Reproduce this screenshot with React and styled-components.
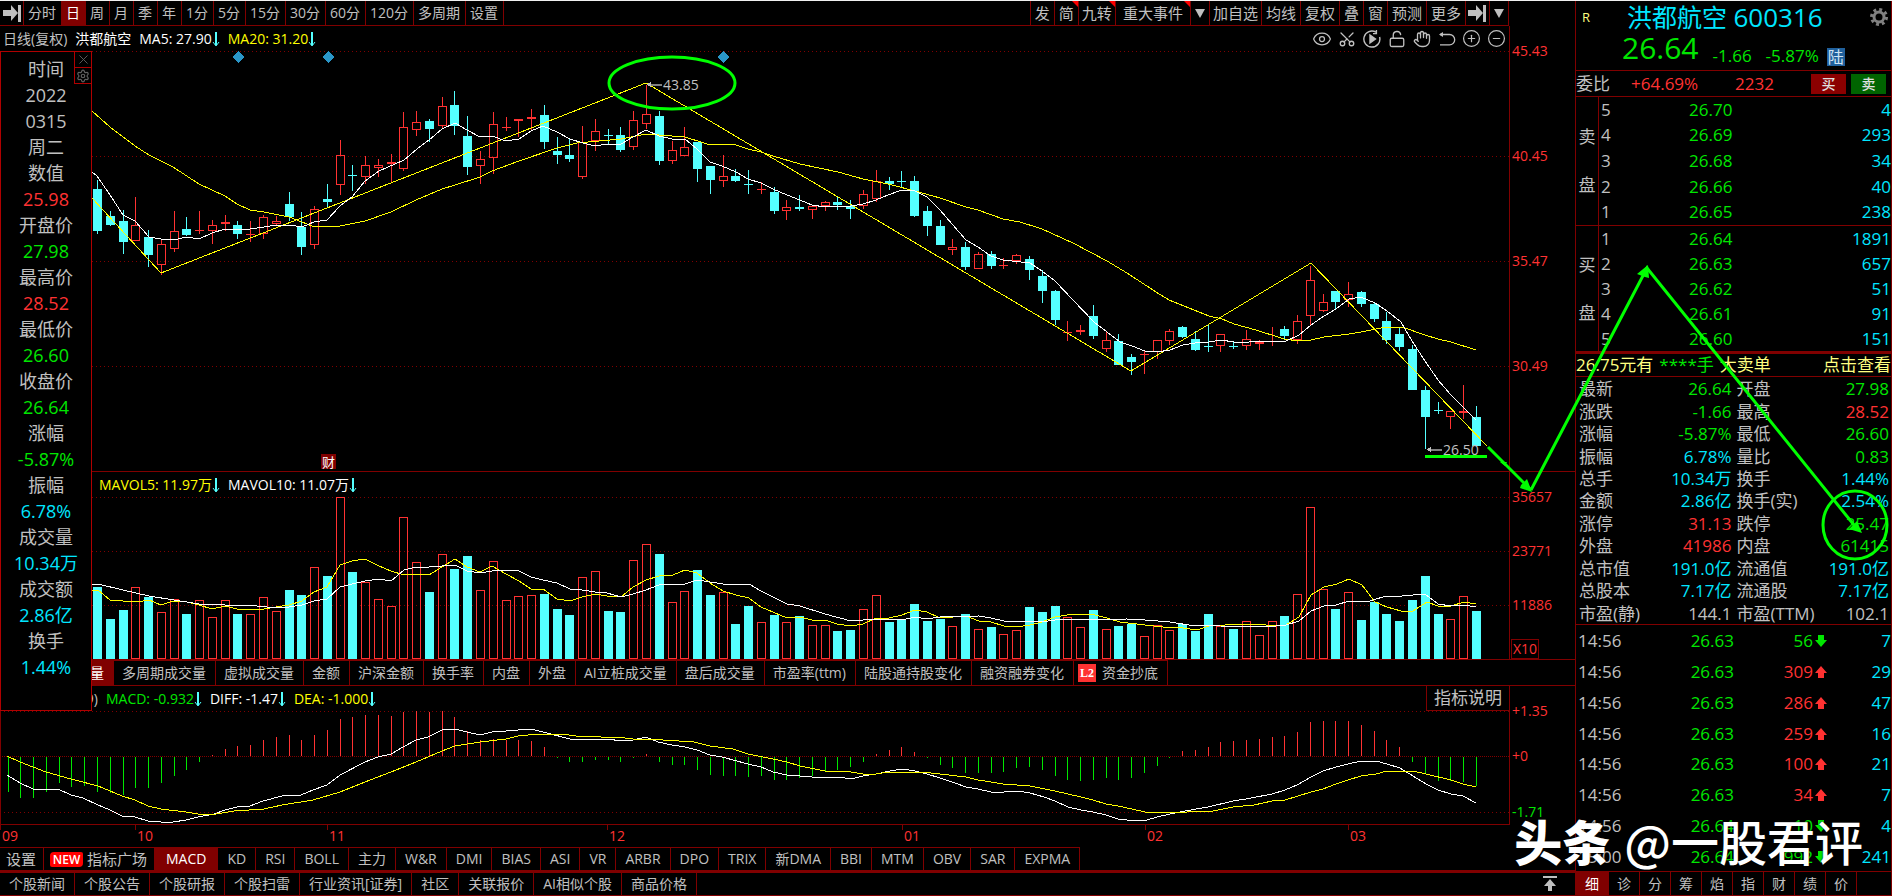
import React, { useState } from 'react';
import styled, { createGlobalStyle, css } from 'styled-components';
import { Eye, Scissors, LockOpen, Hand, CirclePlus, CircleMinus, X, Settings } from 'lucide-react';

const colors = {
  line: '#800000',
  frame: '#b00000',
  grey: '#c0c0c0',
  red: '#ff3232',
  green: '#00e600',
  cyan: '#00e6ff',
  bar: '#54ffff',
  yellow: '#ffff00',
  pale: '#ffff80',
  white: '#ffffff',
  mark: '#00ff00',
};

const PITCH = 12.767;
const center = (i) => 97 + Math.round(PITCH * i);

// [rising, high, body top, body bottom, low, volume top]
const candles = [
  [0, 180, 189, 231, 234, 587], [0, 211, 216, 225, 226, 619], [0, 210, 221, 242, 254, 610],
  [1, 197, 225, 241, 241, 587], [0, 230, 237, 255, 267, 597], [1, 240, 244, 265, 275, 612],
  [1, 211, 231, 249, 252, 599], [0, 217, 229, 235, 236, 614], [1, 211, 230, 231, 234, 600],
  [1, 220, 225, 231, 244, 617], [1, 215, 222, 224, 231, 600], [0, 221, 225, 234, 239, 614],
  [1, 221, 234, 235, 242, 614], [1, 215, 217, 234, 239, 597], [1, 216, 221, 224, 226, 611],
  [0, 192, 204, 217, 221, 590], [0, 212, 227, 247, 255, 595], [1, 206, 209, 245, 249, 567],
  [0, 184, 199, 202, 207, 576], [1, 140, 155, 185, 195, 497], [0, 165, 175, 176, 191, 572],
  [1, 156, 165, 177, 184, 582], [1, 159, 165, 168, 177, 599], [1, 154, 162, 164, 182, 606],
  [1, 112, 127, 169, 171, 517], [1, 111, 122, 130, 136, 562], [0, 119, 121, 129, 142, 592],
  [1, 97, 106, 126, 128, 554], [0, 91, 105, 126, 135, 569], [0, 116, 136, 167, 175, 556],
  [1, 151, 159, 166, 184, 590], [1, 112, 124, 158, 174, 561], [1, 117, 127, 128, 131, 600],
  [1, 119, 119, 121, 137, 596], [1, 109, 117, 119, 130, 595], [0, 105, 115, 142, 149, 594],
  [0, 137, 151, 155, 164, 609], [0, 138, 155, 159, 162, 615], [1, 126, 142, 177, 179, 577],
  [1, 119, 131, 141, 151, 571], [0, 129, 135, 136, 145, 611], [0, 127, 135, 150, 152, 612],
  [1, 111, 120, 147, 150, 560], [1, 85, 114, 124, 129, 544], [0, 111, 116, 161, 165, 554],
  [1, 141, 150, 161, 164, 602], [1, 127, 147, 156, 156, 591], [0, 142, 142, 169, 182, 570],
  [0, 166, 166, 180, 194, 595], [1, 155, 176, 181, 187, 592], [0, 169, 176, 181, 182, 624],
  [0, 170, 184, 185, 194, 606], [1, 182, 189, 190, 194, 622], [0, 187, 192, 211, 214, 615],
  [1, 200, 207, 211, 220, 622], [0, 195, 207, 209, 211, 616], [1, 206, 206, 210, 219, 625],
  [1, 201, 202, 206, 211, 625], [0, 196, 202, 205, 210, 631], [0, 200, 206, 209, 219, 630],
  [1, 190, 194, 206, 209, 609], [1, 170, 181, 199, 202, 595], [0, 177, 181, 184, 190, 622],
  [0, 171, 181, 182, 187, 620], [0, 176, 181, 216, 217, 604], [0, 206, 211, 226, 236, 621],
  [0, 220, 226, 245, 245, 619], [1, 239, 247, 250, 255, 626], [0, 242, 247, 267, 270, 614],
  [1, 252, 254, 269, 269, 629], [0, 251, 254, 266, 269, 627], [1, 258, 265, 266, 269, 634],
  [1, 254, 255, 261, 264, 630], [0, 256, 259, 270, 280, 607], [0, 270, 276, 291, 303, 612],
  [0, 290, 291, 320, 325, 606], [1, 321, 332, 333, 341, 617], [1, 325, 330, 332, 335, 627],
  [0, 305, 316, 336, 339, 610], [1, 332, 340, 349, 352, 629], [0, 334, 341, 365, 365, 626],
  [0, 354, 357, 362, 375, 624], [1, 350, 354, 355, 374, 636], [1, 340, 340, 352, 359, 625],
  [1, 329, 331, 341, 345, 630], [0, 326, 327, 337, 338, 624], [0, 331, 339, 350, 351, 631],
  [0, 325, 346, 347, 352, 614], [1, 334, 334, 346, 352, 626], [0, 342, 346, 347, 349, 629],
  [1, 330, 339, 346, 350, 621], [1, 340, 342, 344, 350, 635], [1, 327, 341, 342, 346, 621],
  [0, 326, 329, 336, 340, 616], [1, 315, 321, 340, 344, 594], [1, 266, 280, 316, 325, 507],
  [1, 294, 302, 311, 312, 589], [0, 291, 291, 302, 309, 609], [1, 282, 294, 300, 307, 592],
  [0, 291, 292, 304, 307, 620], [0, 302, 304, 319, 322, 602], [0, 312, 321, 340, 344, 614],
  [0, 328, 334, 347, 351, 621], [0, 345, 349, 390, 390, 600], [0, 386, 390, 417, 449, 576],
  [0, 402, 410, 411, 414, 614], [1, 411, 411, 417, 429, 619], [1, 385, 411, 413, 419, 596],
  [0, 406, 417, 446, 446, 611],
];

// histogram starts seven bars before the first visible candle
const macdBars = [
  -35, -41, -41, -35, -26, -30, -29, -35, -36, -38, -31, -31, -26, -19, -13, -5, 1, 7, 10, 11,
  16, 19, 21, 16, 21, 26, 37, 39, 41, 41, 40, 44, 45, 44, 45, 39, 25, 16, 17, 16, 16, 15, 9,
  -1, -5, -5, -3, -3, -5, -1, 2, -5, -8, -8, -13, -18, -19, -19, -20, -19, -23, -23, -21,
  -19, -15, -13, -10, -5, 2, 6, 9, 4, -1, -8, -11, -16, -16, -16, -15, -11, -10, -13, -19, -23,
  -24, -23, -21, -23, -21, -16, -9, -1, 5, 6, 9, 14, 15, 16, 17, 19, 20, 24, 34, 35, 35, 35, 31,
  25, 16, 9, -5, -17, -24, -24, -25, -29,
];

const ma5 =
  '92,172 97,176 110,195 123,215 135,221 149,237 161,239 173,240 187,237 199,239 212,233 225,229 250,229 264,227 276,225 289,225 302,227 314,222 327,220 340,206 352,197 365,181 379,171 404,160 417,149 429,140 442,129 455,123 467,130 480,137 492,136 506,141 519,139 531,131 543,126 557,132 570,139 583,143 595,146 607,144 621,144 633,137 646,130 659,136 672,139 685,139 697,149 710,162 722,166 736,172 748,179 761,183 773,189 787,195 800,200 812,205 825,207 851,206 863,204 876,200 888,195 902,190 915,191 927,197 940,210 952,224 966,240 978,247 991,256 1003,260 1030,263 1042,271 1055,281 1073,300 1094,322 1107,332 1120,342 1132,346 1145,351 1157,352 1170,350 1183,345 1195,343 1209,342 1221,340 1234,342 1249,342 1270,341 1286,341 1299,335 1311,325 1324,316 1336,309 1349,299 1361,297 1368,300 1375,303 1387,311 1401,322 1412,341 1425,361 1438,380 1451,395 1464,408 1476,420';
const ma20 =
  '92,111 110,127 135,146 149,155 173,167 199,184 225,196 237,204 250,210 264,212 289,217 302,222 312,226 340,226 365,221 391,212 416,200 442,189 455,185 480,177 492,171 519,161 557,148 577,143 621,139 646,134 685,137 707,144 736,145 748,149 761,152 773,156 800,164 838,172 863,179 888,184 915,191 940,198 966,207 978,210 1003,219 1020,222 1042,229 1073,243 1107,261 1127,273 1156,292 1169,300 1209,316 1222,319 1234,324 1256,330 1284,339 1299,341 1311,340 1324,337 1349,334 1361,332 1381,328 1402,327 1425,335 1438,339 1451,342 1476,350';
const zigzag = '92,198 161,273 646,83 1131,371 1311,263 1487,446';
const mavol5 =
  '92,590 98,590 110,600 123,601 137,602 149,600 161,605 173,601 187,602 199,605 212,609 225,606 237,609 264,609 276,607 289,605 302,601 314,592 327,587 340,565 352,561 365,559 379,566 391,571 404,575 420,574 429,575 442,567 455,559 467,567 480,572 492,566 506,574 519,581 531,589 543,589 557,599 570,601 582,597 595,594 607,596 621,597 633,587 646,580 659,576 673,575 685,570 697,573 710,583 723,591 736,595 749,598 761,607 787,618 800,617 812,620 825,620 837,624 851,626 863,624 876,618 889,618 902,615 915,610 927,612 940,618 966,616 979,621 991,622 1004,626 1017,627 1030,625 1042,622 1055,617 1067,615 1081,614 1095,615 1107,618 1120,622 1145,625 1163,627 1183,628 1197,630 1209,626 1241,624 1266,625 1286,625 1299,617 1311,595 1324,587 1337,584 1349,579 1362,585 1375,602 1387,607 1401,611 1413,611 1427,602 1438,606 1451,606 1464,602 1476,604';
const mavol10 =
  '92,584 98,584 123,590 149,596 199,604 225,605 257,606 276,608 289,607 302,605 314,601 327,599 340,587 352,584 365,581 379,579 391,581 404,570 416,567 429,567 455,565 467,571 480,573 492,571 517,570 531,577 543,580 557,583 570,589 582,590 595,592 607,593 621,597 633,594 646,590 659,585 685,584 697,580 710,582 723,584 736,585 749,584 761,591 787,604 800,606 825,614 851,621 876,619 902,620 915,617 927,619 940,617 979,616 991,618 1004,621 1017,622 1030,621 1042,622 1055,620 1127,619 1145,620 1170,622 1195,626 1209,625 1220,626 1266,627 1286,625 1299,621 1311,611 1324,606 1336,605 1349,601 1370,601 1386,596 1402,596 1425,594 1438,604 1451,606 1464,605 1476,607';
const diff =
  '7,775 20,783 33,789 58,789 71,795 83,798 98,805 110,810 122,816 135,817 148,821 161,822 173,822 186,820 198,817 214,814 225,810 237,807 250,806 263,801 282,796 301,795 313,790 327,785 340,775 365,762 378,757 391,754 403,747 416,740 428,737 442,730 455,729 467,732 480,735 492,732 506,731 531,729 543,732 570,739 608,739 621,741 633,740 646,737 658,742 672,745 685,747 697,750 710,755 722,757 748,764 761,767 773,772 787,775 800,776 812,777 838,777 851,779 863,776 876,774 890,771 902,769 915,771 927,774 940,778 952,782 966,787 978,789 991,792 1004,792 1017,791 1030,793 1044,797 1055,801 1068,807 1081,810 1093,812 1106,815 1118,819 1127,820 1147,820 1157,817 1170,814 1185,811 1208,807 1233,801 1246,799 1272,794 1285,790 1297,785 1311,777 1323,771 1336,767 1348,764 1361,761 1376,761 1387,764 1400,768 1413,776 1426,784 1438,790 1451,794 1463,796 1476,803';
const dea =
  '7,756 20,762 33,767 46,772 71,779 98,786 122,796 135,800 148,806 161,809 186,812 198,814 216,814 234,811 264,809 282,805 313,800 340,792 365,782 391,772 416,762 442,751 455,746 480,742 506,739 518,736 539,734 561,734 576,736 625,738 633,739 663,740 694,742 710,746 733,749 748,754 773,759 787,762 800,766 825,771 851,772 863,774 876,774 888,772 922,772 940,774 966,777 978,780 991,782 1003,784 1030,786 1055,791 1081,797 1093,800 1106,804 1118,806 1132,809 1145,812 1154,812 1187,812 1213,811 1233,807 1254,805 1272,801 1285,800 1311,792 1323,789 1336,784 1348,780 1361,776 1376,774 1387,771 1413,771 1426,774 1451,780 1463,784 1476,787';

const periods = ['分时', '日', '周', '月', '季', '年', '1分', '5分', '15分', '30分', '60分', '120分', '多周期', '设置'];
const volumeTabs = ['成交量', '多周期成交量', '虚拟成交量', '金额', '沪深金额', '换手率', '内盘', '外盘', 'AI立桩成交量', '盘后成交量', '市盈率(ttm)', '陆股通持股变化', '融资融券变化'];
const indicators = ['MACD', 'KD', 'RSI', 'BOLL', '主力', 'W&R', 'DMI', 'BIAS', 'ASI', 'VR', 'ARBR', 'DPO', 'TRIX', '新DMA', 'BBI', 'MTM', 'OBV', 'SAR', 'EXPMA'];
const news = ['个股新闻', '个股公告', '个股研报', '个股扫雷', '行业资讯[证券]', '社区', '关联报价', 'AI相似个股', '商品价格'];
const sideTabs = ['细', '诊', '分', '筹', '焰', '指', '财', '绩', '价'];
const months = [['09', 0], ['10', 135], ['11', 327], ['12', 607], ['01', 902], ['02', 1145], ['03', 1348]];

const dayData = [
  ['时间'], ['2022'], ['0315'], ['周二'],
  ['数值'], ['25.98', 'red'], ['开盘价'], ['27.98', 'green'],
  ['最高价'], ['28.52', 'red'], ['最低价'], ['26.60', 'green'],
  ['收盘价'], ['26.64', 'green'], ['涨幅'], ['-5.87%', 'green'],
  ['振幅'], ['6.78%', 'cyan'], ['成交量'], ['10.34万', 'cyan'],
  ['成交额'], ['2.86亿', 'cyan'], ['换手'], ['1.44%', 'cyan'],
];

const asks = [['5', '26.70', '4'], ['4', '26.69', '293'], ['3', '26.68', '34'], ['2', '26.66', '40'], ['1', '26.65', '238']];
const bids = [['1', '26.64', '1891'], ['2', '26.63', '657'], ['3', '26.62', '51'], ['4', '26.61', '91'], ['5', '26.60', '151']];

const stats = [
  ['最新', '26.64', 'green', '开盘', '27.98', 'green'],
  ['涨跌', '-1.66', 'green', '最高', '28.52', 'red'],
  ['涨幅', '-5.87%', 'green', '最低', '26.60', 'green'],
  ['振幅', '6.78%', 'cyan', '量比', '0.83', 'green'],
  ['总手', '10.34万', 'cyan', '换手', '1.44%', 'cyan'],
  ['金额', '2.86亿', 'cyan', '换手(实)', '2.54%', 'cyan'],
  ['涨停', '31.13', 'red', '跌停', '25.47', 'green'],
  ['外盘', '41986', 'red', '内盘', '61415', 'green'],
  ['总市值', '191.0亿', 'cyan', '流通值', '191.0亿', 'cyan'],
  ['总股本', '7.17亿', 'cyan', '流通股', '7.17亿', 'cyan'],
  ['市盈(静)', '144.1', 'grey', '市盈(TTM)', '102.1', 'grey'],
];

const trades = [
  ['14:56', '26.63', '56', 0, '7'],
  ['14:56', '26.63', '309', 1, '29'],
  ['14:56', '26.63', '286', 1, '47'],
  ['14:56', '26.63', '259', 1, '16'],
  ['14:56', '26.63', '100', 1, '21'],
  ['14:56', '26.63', '34', 1, '7'],
  ['14:56', '26.64', '10', 0, '4'],
  ['15:00', '26.64', '992', 0, '241'],
];

const GoToEnd = () => (
  <svg width='19' height='17' viewBox='0 0 19 17' fill={colors.grey}>
    <path d='M0 5h8V0l7 8-7 8v-5H0z' />
    <rect x='15' y='0' width='3' height='17' />
  </svg>
);

const Caret = () => (
  <svg width='10' height='9' viewBox='0 0 10 9' fill={colors.grey}>
    <path d='M0 0h10L5 9z' />
  </svg>
);

const DownMark = () => (
  <svg width='8' height='16' viewBox='0 0 8 16' fill='none' stroke={colors.bar}>
    <path d='M4 1v13' strokeWidth='2' />
    <path d='M1 11l3 4 3-4' />
  </svg>
);

const BlockArrow = ({ up }) => (
  <svg width='12' height='12' viewBox='0 0 12 12' fill={up ? colors.red : colors.green}>
    <path d={up ? 'M6 0l6 7H9v5H3V7H0z' : 'M6 12l6-7H9V0H3v5H0z'} />
  </svg>
);

const Replay = () => (
  <svg width='18' height='18' viewBox='0 0 18 18' fill='none' stroke={colors.grey} strokeWidth='1.4'>
    <path d='M13 2.2A8 8 0 1 0 16.6 7' />
    <path d='M13.4 0v3.6H10' />
    <path d='M7 5l5.5 4L7 13z' fill={colors.grey} />
  </svg>
);

const Undo = () => (
  <svg width='18' height='18' viewBox='0 0 18 18' fill='none' stroke={colors.grey} strokeWidth='1.3'>
    <path d='M2 4.5h9.5a5.2 5.2 0 0 1 0 10.4H2' />
    <path d='M5 2L1 4.5 5 7z' fill={colors.grey} stroke='none' />
  </svg>
);

const ToTop = () => (
  <svg width='14' height='16' viewBox='0 0 14 16' fill={colors.grey}>
    <path d='M0 0h14v2H0zM7 3l6 7H9v5H5v-5H1z' />
  </svg>
);

const Candles = () =>
  candles.map(([up, high, top, bottom, low], i) => {
    const x = center(i);
    const color = up ? colors.red : colors.bar;
    const flat = bottom - top < 2;
    return (
      <g key={i} stroke={color} fill={up ? 'none' : color}>
        <path d={`M${x + 0.5} ${high}V${top}M${x + 0.5} ${bottom}V${low}`} />
        {flat && <path d={`M${x - 4} ${top + 0.5}h9`} />}
        {!flat && up === 1 && <rect x={x - 3.5} y={top + 0.5} width='8' height={bottom - top - 1} />}
        {!flat && !up && <rect x={x - 4} y={top} width='9' height={bottom - top} stroke='none' />}
      </g>
    );
  });

const Volumes = () =>
  candles.map(([up, , , , , top], i) => {
    const x = center(i);
    return up ? (
      <rect key={i} x={x - 3.5} y={top + 0.5} width='8' height={658 - top} fill='none' stroke={colors.red} />
    ) : (
      <rect key={i} x={x - 4} y={top} width='9' height={659 - top} fill={colors.bar} />
    );
  });

const Histogram = () =>
  macdBars.map((value, i) => (
    <path
      key={i}
      d={`M${center(i - 7) + 0.5} ${value > 0 ? 756 : 757}v${-value}`}
      stroke={value > 0 ? colors.red : colors.green}
    />
  ));

const Grid = ({ rows }) =>
  rows.map((y) => (
    <line key={y} x1='0' x2='100%' y1={y + 0.5} y2={y + 0.5} stroke={colors.line} strokeDasharray='1 3' />
  ));

const Book = ({ side, rows, $thick }) => (
  <BookSection $thick={$thick}>
    <BookSide>
      <span>{side}</span>
      <span>盘</span>
    </BookSide>
    <BookTable>
      <tbody>
        {rows.map(([level, price, amount]) => (
          <tr key={level}>
            <Cell $color='grey'>{level}</Cell>
            <Cell $color='green'>{price}</Cell>
            <Cell $color='cyan' $right>{amount}</Cell>
          </tr>
        ))}
      </tbody>
    </BookTable>
  </BookSection>
);

const App = () => {
  const [period, setPeriod] = useState('日');
  const [volumeTab, setVolumeTab] = useState('成交量');
  const [indicator, setIndicator] = useState('MACD');
  const [sideTab, setSideTab] = useState('细');

  return (
    <Terminal>
      <GlobalStyle />
      <Main>
        <Toolbar>
          <ToolButton aria-label='收起'>
            <GoToEnd />
          </ToolButton>
          {periods.map((name) => (
            <ToolButton key={name} $active={name === period} onClick={() => setPeriod(name)}>
              {name}
            </ToolButton>
          ))}
          <Spacer />
          <MenuButton $first>发</MenuButton>
          <MenuButton $flag>简</MenuButton>
          <MenuButton $flag $pad={3}>九转</MenuButton>
          <MenuButton $flag $pad={7}>重大事件</MenuButton>
          <MenuButton aria-label='展开'><Caret /></MenuButton>
          <MenuButton $pad={3}>加自选</MenuButton>
          <MenuButton>均线</MenuButton>
          <MenuButton>复权</MenuButton>
          <MenuButton>叠</MenuButton>
          <MenuButton>窗</MenuButton>
          <MenuButton>预测</MenuButton>
          <MenuButton>更多</MenuButton>
          <MenuButton $pad={2} aria-label='最新'><GoToEnd /></MenuButton>
          <MenuButton aria-label='菜单'><Caret /></MenuButton>
        </Toolbar>

        <Pane>
          <Plot>
            <InfoRow $left={3}>
              <Info $color='grey'>日线(复权)</Info>
              <Info $color='white'>洪都航空</Info>
              <Info $color='white'>MA5: 27.90<DownMark /></Info>
              <Info $color='yellow'>MA20: 31.20<DownMark /></Info>
              <ChartTools>
                <IconButton aria-label='显示'><Eye size={20} strokeWidth={1.5} /></IconButton>
                <IconButton aria-label='剪切' $turn><Scissors size={18} strokeWidth={1.75} /></IconButton>
                <IconButton aria-label='回放'><Replay /></IconButton>
                <IconButton aria-label='锁定'><LockOpen size={18} strokeWidth={1.75} /></IconButton>
                <IconButton aria-label='拖动'><Hand size={18} strokeWidth={1.75} /></IconButton>
                <IconButton aria-label='撤销'><Undo /></IconButton>
                <IconButton aria-label='放大'><CirclePlus size={19} strokeWidth={1.5} /></IconButton>
                <IconButton aria-label='缩小'><CircleMinus size={19} strokeWidth={1.5} /></IconButton>
              </ChartTools>
            </InfoRow>
            <Chart $height={420}>
              <g transform='translate(0 -51)'>
                <Grid rows={[51, 156, 261, 366]} />
                <Candles />
                <polyline points={ma20} stroke={colors.yellow} />
                <polyline points={zigzag} stroke={colors.yellow} />
                <polyline points={ma5} stroke={colors.white} />
                {[238, 328, 723].map((x) => (
                  <path key={x} d={`M${x} 51l6 6-6 6-6-6z`} fill='#2a96c8' />
                ))}
                <path d='M648 84.5h14M1428 449.5h14' stroke='#808080' strokeWidth='2' />
                <path d='M647 84.5l4-3v6zM1427 449.5l4-3v6z' fill={colors.grey} />
                <ChartText x='663' y='90'>43.85</ChartText>
                <ChartText x='1443' y='455'>26.50</ChartText>
                <rect x='321' y='454' width='15' height='15' fill={colors.line} />
                <ChartText x='322' y='467' $color='white' $size={13}>财</ChartText>
              </g>
            </Chart>
          </Plot>
          <Axis $rows='105px 105px 105px 20px'>
            <li>45.43</li>
            <li>40.45</li>
            <li>35.47</li>
            <li>30.49</li>
          </Axis>
        </Pane>

        <Pane>
          <Plot>
            <InfoRow $left={99}>
              <Info $color='yellow'>MAVOL5: 11.97万<DownMark /></Info>
              <Info $color='white'>MAVOL10: 11.07万<DownMark /></Info>
            </InfoRow>
            <Chart $height={162}>
              <g transform='translate(0 -497)'>
                <Grid rows={[497, 551, 605]} />
                <Volumes />
                <polyline points={mavol5} stroke={colors.yellow} />
                <polyline points={mavol10} stroke={colors.white} />
              </g>
            </Chart>
          </Plot>
          <Axis $rows='54px 54px 1fr auto'>
            <li>35657</li>
            <li>23771</li>
            <li>11886</li>
            <Unit>X10</Unit>
          </Axis>
        </Pane>

        <VolumeTabs>
          {volumeTabs.map((name) => (
            <TabButton key={name} $active={name === volumeTab} onClick={() => setVolumeTab(name)}>
              {name}
            </TabButton>
          ))}
          <TabButton $badge>
            <LevelBadge>L2</LevelBadge>资金抄底
          </TabButton>
        </VolumeTabs>

        <Pane $open>
          <Plot $closed>
            <InfoRow $left={2}>
              <Info $color='grey'>MACD(12,26,9)</Info>
              <Info $color='green'>MACD: -0.932<DownMark /></Info>
              <Info $color='white'>DIFF: -1.47<DownMark /></Info>
              <Info $color='yellow'>DEA: -1.000<DownMark /></Info>
              <HelpButton>指标说明</HelpButton>
            </InfoRow>
            <Chart $height={113}>
              <g transform='translate(0 -711)'>
                <Grid rows={[711, 812]} />
                <line x1='0' x2='100%' y1='756.5' y2='756.5' stroke={colors.line} strokeDasharray='1 1' />
                <path d='M0.5 711v113' stroke={colors.line} />
                <Histogram />
                <polyline points={diff} stroke={colors.white} />
                <polyline points={dea} stroke={colors.yellow} />
              </g>
            </Chart>
          </Plot>
          <Axis $rows='45px 56px 20px'>
            <li>+1.35</li>
            <li>+0</li>
            <Fall>-1.71</Fall>
          </Axis>
        </Pane>
        <Chart $height={22}>
          {months.map(([name, x]) => (
            <g key={name}>
              <path d={`M${x + 0.5} 0v5`} stroke={colors.line} />
              <ChartText x={x + 2} y='16' $color='red'>{name}</ChartText>
            </g>
          ))}
        </Chart>

        <IndicatorTabs>
          <TabButton $large>设置</TabButton>
          <TabButton $large>
            <NewBadge>NEW</NewBadge>指标广场
          </TabButton>
          {indicators.map((name) => (
            <TabButton key={name} $wide $active={name === indicator} onClick={() => setIndicator(name)}>
              {name}
            </TabButton>
          ))}
        </IndicatorTabs>
        <NewsBar>
          {news.map((name) => (
            <NewsLink key={name} href='#'>{name}</NewsLink>
          ))}
          <TopButton aria-label='置顶'><ToTop /></TopButton>
        </NewsBar>

        <DayPanel>
          {dayData.map(([text, color], i) => (
            <DayLine key={i} $color={color}>{text}</DayLine>
          ))}
          <DayTools>
            <DayButton aria-label='关闭'><X size={15} strokeWidth={1.5} /></DayButton>
            <DayButton aria-label='设置'><Settings size={14} strokeWidth={2} /></DayButton>
          </DayTools>
        </DayPanel>
      </Main>

      <Quote>
        <QuoteHead>
          <TitleRow>
            <Tag>R</Tag>
            <Title>洪都航空 <Code>600316</Code></Title>
            <IconButton $dim aria-label='设置'>
              <svg width='18' height='18' viewBox='0 0 18 18' fill='none' stroke='#808080'>
                <circle cx='9' cy='9' r='5' strokeWidth='3' />
                <circle cx='9' cy='9' r='7.5' strokeWidth='3' strokeDasharray='2.9 2.99' />
              </svg>
            </IconButton>
          </TitleRow>
          <PriceRow>
            <Price>26.64</Price>
            <span>-1.66</span>
            <span>-5.87%</span>
            <MarketBadge>陆</MarketBadge>
          </PriceRow>
        </QuoteHead>
        <RatioRow>
          <span>委比</span>
          <Rise>+64.69%</Rise>
          <Rise>2232</Rise>
          <TradeButton>买</TradeButton>
          <TradeButton $sell>卖</TradeButton>
        </RatioRow>
        <Book side='卖' rows={asks} />
        <Book side='买' rows={bids} $thick />
        <Alert>
          <span>26.75元有</span>
          <AlertAmount>****手</AlertAmount>
          <span>大卖单</span>
          <AlertLink href='#'>点击查看</AlertLink>
        </Alert>
        <StatTable>
          <tbody>
            {stats.map(([a, av, ac, b, bv, bc]) => (
              <tr key={a}>
                <Cell $color='grey'>{a}</Cell>
                <Cell $color={ac} $right>{av}</Cell>
                <Cell $color='grey'>{b}</Cell>
                <Cell $color={bc} $right>{bv}</Cell>
              </tr>
            ))}
          </tbody>
        </StatTable>
        <TradeTable>
          <tbody>
            {trades.map(([time, price, amount, up, count], i) => (
              <tr key={i}>
                <Cell $color='grey'>{time}</Cell>
                <Cell $color='green' $right>{price}</Cell>
                <Cell $color={up ? 'red' : 'green'} $right>
                  {amount}
                  <BlockArrow up={up} />
                </Cell>
                <Cell $color='cyan' $right>{count}</Cell>
              </tr>
            ))}
          </tbody>
        </TradeTable>
        <SideTabs>
          {sideTabs.map((name) => (
            <SideTab key={name} $active={name === sideTab} onClick={() => setSideTab(name)}>
              {name}
            </SideTab>
          ))}
        </SideTabs>
      </Quote>

      <Drawing>
        <g fill='none' stroke={colors.mark} strokeWidth='3'>
          <ellipse cx='672' cy='83' rx='63' ry='26' />
          <ellipse cx='1855' cy='525' rx='32' ry='34' />
          <path d='M1425 456.5h62M1488 447L1530 489M1531 490L1647 268L1858 530' />
        </g>
        <g fill={colors.mark}>
          <path d='M1532 492l-12-4 1-3 3-3 3-3zM1648 265l1 13-4-1-8-3zM1862 533l-13-4 4-4 4-4z' />
          <path d='M1500 462l7 0-2 4z' />
        </g>
      </Drawing>
      <Watermark>
        <strong>头条</strong>
        <span>@一股君评</span>
      </Watermark>
    </Terminal>
  );
};

const GlobalStyle = createGlobalStyle`
  * {
    box-sizing: border-box;
  }
  body {
    margin: 0;
    background: #000;
    color: ${colors.grey};
    font-family: 'Open Sans', 'Noto Sans CJK SC', sans-serif;
    font-size: 14px;
    line-height: 20px;
  }
  button {
    margin: 0;
    padding: 0;
    border: 0;
    background: none;
    color: inherit;
    font: inherit;
    cursor: pointer;
  }
  a {
    color: inherit;
    text-decoration: none;
  }
  svg {
    flex: none;
  }
`;

const Terminal = styled.div`
  position: relative;
  display: flex;
  border-top: 1px solid #f0f0f0;
  overflow: hidden;
  white-space: nowrap;
`;

const Main = styled.main`
  position: relative;
  flex: 1;
  min-width: 0;
  display: flex;
  flex-direction: column;
`;

const Toolbar = styled.div`
  display: flex;
  height: 25px;
  margin-right: 66px;
  border-bottom: 1px solid ${colors.line};
`;

const ToolButton = styled.button`
  display: flex;
  align-items: center;
  padding: 0 5px 0 4px;
  border-right: 1px solid ${colors.line};
  ${(p) => p['aria-label'] && css`padding: 0 1px 0 3px;`}
  ${(p) => p.$active && css`
    background: ${colors.line};
    color: ${colors.white};
  `}
`;

const MenuButton = styled.button`
  position: relative;
  display: flex;
  align-items: center;
  padding: 0 ${(p) => p.$pad || 4}px;
  border-right: 1px solid ${colors.line};
  font-size: 15px;
  ${(p) => p.$first && css`border-left: 1px solid ${colors.line};`}
  ${(p) => p.$flag && css`
    &::after {
      content: '';
      position: absolute;
      top: 0;
      right: 0;
      border-top: 6px solid #ff0000;
      border-left: 6px solid transparent;
    }
  `}
`;

const Spacer = styled.div`
  flex: 1;
`;

const Pane = styled.section`
  display: flex;
  ${(p) => !p.$open && css`border-bottom: 1px solid ${colors.line};`}
`;

const Plot = styled.div`
  flex: 1;
  min-width: 0;
  border-right: 1px solid ${colors.line};
  ${(p) => p.$closed && css`border-bottom: 1px solid ${colors.line};`}
`;

const InfoRow = styled.div`
  display: flex;
  align-items: center;
  gap: 8px;
  height: 25px;
  padding-left: ${(p) => p.$left}px;
`;

const Info = styled.span`
  display: flex;
  align-items: center;
  color: ${(p) => colors[p.$color]};
`;

const ChartTools = styled.div`
  display: flex;
  align-items: center;
  margin-left: auto;
`;

const IconButton = styled.button`
  display: flex;
  align-items: center;
  justify-content: center;
  width: 25px;
  height: 24px;
  ${(p) => p.$turn && css`
    svg {
      transform: rotate(-90deg);
    }
  `}
  ${(p) => p.$dim && css`margin-left: auto;`}
`;

const Chart = styled.svg`
  display: block;
  width: 100%;
  height: ${(p) => p.$height}px;
  fill: none;
  shape-rendering: crispEdges;
`;

const ChartText = styled.text`
  fill: ${(p) => colors[p.$color || 'grey']};
  font-size: ${(p) => p.$size || 14}px;
`;

const Axis = styled.ul`
  display: grid;
  grid-template-rows: ${(p) => p.$rows};
  width: 65px;
  margin: 0;
  padding: 15px 0 0 2px;
  list-style: none;
  color: ${colors.red};
`;

const Unit = styled.li`
  justify-self: start;
  margin-left: -1px;
  padding: 0 1px;
  border: 1px solid ${colors.line};
  line-height: 18px;
`;

const Fall = styled.li`
  color: ${colors.green};
`;

const TabBar = styled.div`
  display: flex;
`;

const VolumeTabs = styled(TabBar)`
  height: 26px;
  padding-left: 54px;
  border-bottom: 1px solid ${colors.line};
`;

const IndicatorTabs = styled(TabBar)`
  height: 26px;
  border-bottom: 3px solid ${colors.line};
`;

const TabButton = styled.button`
  display: flex;
  align-items: center;
  padding: 0 9px 0 8px;
  border-right: 1px solid ${colors.line};
  border-top: 1px solid ${colors.line};
  ${(p) => p.$wide && css`padding: 0 ${p.$active ? 11 : 9}px;`}
  ${(p) => p.$large && css`
    padding: 0 7px 0 6px;
    font-size: 15px;
  `}
  ${(p) => p.$badge && css`padding: 0 9px 0 4px;`}
  ${(p) => p.$active && css`
    background: ${colors.line};
    color: ${colors.white};
  `}
`;

const LevelBadge = styled.b`
  width: 18px;
  margin-right: 6px;
  background: ${colors.red};
  color: ${colors.white};
  font: bold 12px/18px 'Liberation Serif', serif;
  text-align: center;
`;

const NewBadge = styled.b`
  width: 33px;
  margin-right: 4px;
  border-radius: 4px 2px;
  background: #ff0000;
  color: ${colors.white};
  font-size: 12px;
  font-weight: 600;
  line-height: 15px;
  text-align: center;
`;

const HelpButton = styled.button`
  height: 25px;
  margin-left: auto;
  padding: 0 7px;
  border-left: 1px solid ${colors.line};
  border-bottom: 1px solid ${colors.line};
  font-size: 17px;
`;

const NewsBar = styled.nav`
  display: flex;
  align-items: center;
  height: 23px;
  border-bottom: 1px solid ${colors.line};
`;

const NewsLink = styled.a`
  padding: 0 9px;
  border-right: 1px solid ${colors.line};
  line-height: 22px;
`;

const TopButton = styled.button`
  display: flex;
  margin: 0 18px 0 auto;
`;

const DayPanel = styled.aside`
  position: absolute;
  top: 50px;
  left: 0;
  width: 92px;
  height: 660px;
  padding-top: 4px;
  border: 1px solid ${colors.frame};
  background: #000;
  font-size: 18px;
  line-height: 26px;
  text-align: center;
`;

const DayLine = styled.div`
  color: ${(p) => colors[p.$color || 'grey']};
`;

const DayTools = styled.div`
  position: absolute;
  top: 0;
  right: 0;
  color: #606060;
`;

const DayButton = styled.button`
  display: flex;
  align-items: center;
  justify-content: center;
  width: 17px;
  height: 16px;
  border-left: 1px solid ${colors.frame};
  border-bottom: 1px solid ${colors.frame};
`;

const Quote = styled.aside`
  flex: none;
  width: 317px;
  border-left: 1px solid ${colors.line};
  border-right: 1px solid ${colors.line};
  font-size: 17px;
`;

const QuoteHead = styled.header`
  height: 70px;
  border-bottom: 1px solid ${colors.line};
`;

const TitleRow = styled.div`
  display: flex;
  align-items: center;
  height: 32px;
  padding-left: 6px;
`;

const Tag = styled.span`
  width: 45px;
  color: ${colors.pale};
  font-size: 13px;
`;

const Title = styled.h1`
  margin: 0;
  color: ${colors.cyan};
  font-size: 25px;
  font-weight: 400;
`;

const Code = styled.span`
  font-size: 26px;
`;

const PriceRow = styled.div`
  display: flex;
  align-items: flex-end;
  gap: 14px;
  height: 33px;
  padding-left: 46px;
  color: ${colors.green};
`;

const Price = styled.strong`
  font-size: 30px;
  font-weight: 400;
  line-height: 36px;
`;

const MarketBadge = styled.span`
  width: 18px;
  margin-left: -6px;
  background: #20609c;
  color: #d0e4f4;
  font-size: 16px;
  line-height: 18px;
  text-align: center;
`;

const RatioRow = styled.div`
  display: flex;
  align-items: center;
  height: 26px;
  padding-right: 5px;
  border-bottom: 1px solid ${colors.line};
`;

const Rise = styled.span`
  width: 104px;
  padding-left: 21px;
  color: ${colors.red};

  & + & {
    width: auto;
    margin-right: auto;
  }
`;

const TradeButton = styled.button`
  width: 35px;
  height: 20px;
  margin-left: 5px;
  background: ${(p) => (p.$sell ? '#006400' : '#8b0000')};
  color: #e0e0e0;
  font-size: 14px;
  font-weight: 500;
`;

const BookSection = styled.section`
  display: flex;
  height: ${(p) => (p.$thick ? 128 : 129)}px;
  border-bottom: ${(p) => (p.$thick ? 3 : 1)}px solid ${colors.line};
`;

const BookSide = styled.div`
  display: flex;
  flex-direction: column;
  align-items: center;
  justify-content: center;
  gap: 28px;
  width: 23px;
  border-right: 1px solid ${colors.line};
`;

const Table = styled.table`
  width: 100%;
  border-collapse: collapse;
  table-layout: fixed;
  line-height: 20px;
`;

const Cell = styled.td`
  padding: 0;
  color: ${(p) => colors[p.$color]};
  text-align: ${(p) => (p.$right ? 'right' : 'left')};
  svg {
    margin-left: 2px;
  }
`;

const BookTable = styled(Table)`
  flex: 1;
  td:first-child {
    width: 90px;
    padding-left: 2px;
  }
`;

const Alert = styled.div`
  display: flex;
  align-items: center;
  gap: 6px;
  height: 23px;
  border-bottom: 1px solid ${colors.line};
  color: ${colors.pale};
`;

const AlertAmount = styled.span`
  color: ${colors.green};
`;

const AlertLink = styled.a`
  margin-left: auto;
`;

const StatTable = styled(Table)`
  height: 248px;
  border-bottom: 1px solid ${colors.line};
  td {
    padding-top: 2px;
  }
  td:nth-child(odd) {
    width: 83px;
    padding-left: 3px;
  }
  td:nth-child(even) {
    padding-right: 2px;
  }
`;

const TradeTable = styled(Table)`
  height: 246px;
  td {
    padding-top: 2px;
  }
  td:first-child {
    width: 80px;
    padding-left: 2px;
  }
  td:nth-child(2) {
    width: 78px;
  }
  td:nth-child(3) {
    width: 93px;
  }
`;

const SideTabs = styled(TabBar)`
  height: 25px;
  border-top: 1px solid ${colors.line};
  border-bottom: 1px solid ${colors.line};
`;

const SideTab = styled.button`
  width: 31px;
  border-right: 1px solid ${colors.line};
  font-size: 14px;
  ${(p) => p.$active && css`
    width: 33px;
    background: ${colors.line};
    color: ${colors.white};
  `}
`;

const Drawing = styled.svg`
  position: absolute;
  top: -1px;
  left: 0;
  width: 100%;
  height: 896px;
  pointer-events: none;
`;

const Watermark = styled.div`
  position: absolute;
  right: 29px;
  bottom: 22px;
  display: flex;
  gap: 14px;
  color: ${colors.white};
  font: 500 48px/68px 'Noto Sans CJK SC', sans-serif;
  text-shadow: 0 0 2px #000;
  pointer-events: none;

  strong {
    font-weight: 900;
  }
`;

export default App;
